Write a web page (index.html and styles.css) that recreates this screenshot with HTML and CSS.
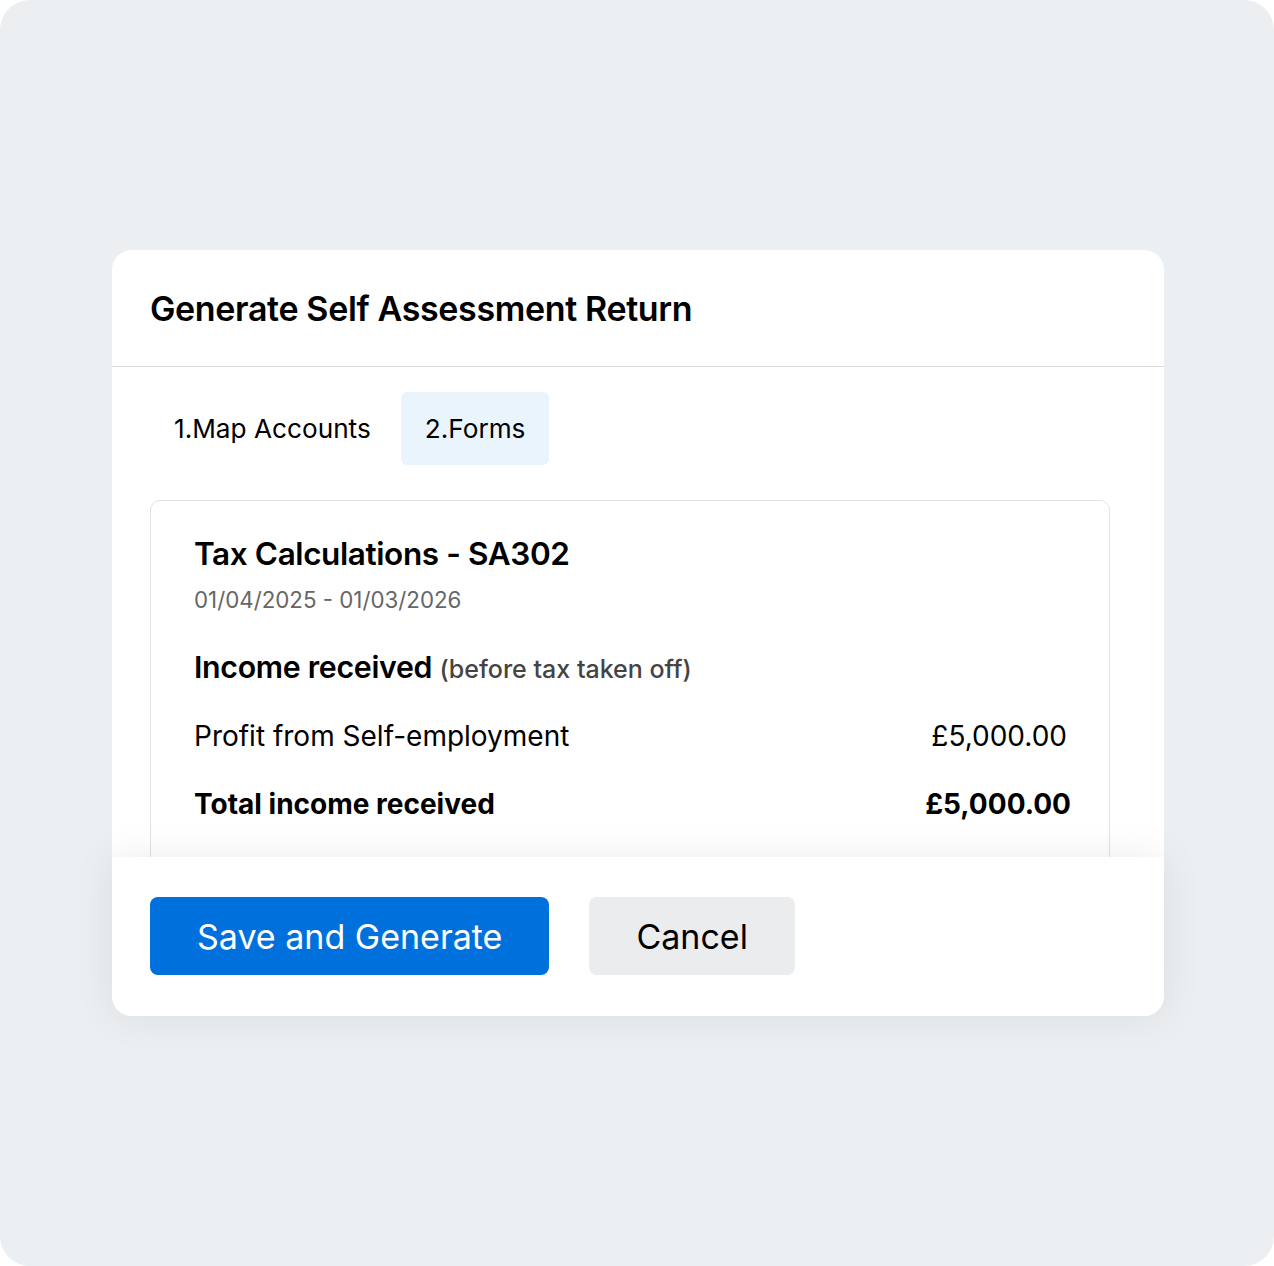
FILE: index.html
```html
<!DOCTYPE html>
<html lang="en">
<head>
    <meta charset="UTF-8">
    <meta name="viewport" content="width=device-width, initial-scale=1.0">
    <title>Generate Self Assessment Return</title>
    <link rel="stylesheet" href="styles.css">
</head>
<body>
    <div class="frame">
        <div class="dialog">
            <div class="dialog-header">
                <h1>Generate Self Assessment Return</h1>
            </div>

            <div class="dialog-body">
                <div class="steps">
                    <div class="step">1.Map Accounts</div>
                    <div class="step active">2.Forms</div>
                </div>

                <div class="form-card">
                    <h2>Tax Calculations - SA302</h2>
                    <div class="period">01/04/2025 - 01/03/2026</div>

                    <h3>Income received <span class="note">(before tax taken off)</span></h3>

                    <div class="row">
                        <span>Profit from Self-employment</span>
                        <span class="amount">£5,000.00</span>
                    </div>
                    <div class="row total">
                        <span>Total income received</span>
                        <span class="amount">£5,000.00</span>
                    </div>
                </div>
            </div>

            <div class="dialog-footer">
                <button type="button" class="btn primary">Save and Generate</button>
                <button type="button" class="btn">Cancel</button>
            </div>
        </div>
    </div>
</body>
</html>
```

FILE: styles.css
```css
* {
    box-sizing: border-box;
}
body {
    margin: 0;
    background: #fff;
    font-family: Inter, "Noto Sans", sans-serif;
    color: #000;
}
.frame {
    width: 1274px;
    height: 1266px;
    border-radius: 30px;
    background: #eceff2;
    display: flex;
    align-items: center;
    justify-content: center;
}
.dialog {
    width: 1052px;
    background: #fff;
    border-radius: 20px;
    display: flex;
    flex-direction: column;
    margin-left: 2px;
}
.dialog-header {
    height: 117px;
    border-bottom: 1px solid #dcdcdc;
    padding: 0 38px;
    display: flex;
    align-items: center;
}
.dialog-header h1 {
    margin: 0;
    font-size: 34px;
    font-weight: 600;
    letter-spacing: -0.35px;
}
.dialog-body {
    height: 490px;
    overflow: hidden;
    padding: 25px 54px 0 38px;
}
.steps {
    display: flex;
    gap: 6px;
    margin-bottom: 35px;
}
.step {
    height: 73px;
    padding: 0 24px;
    border-radius: 6px;
    display: flex;
    align-items: center;
    font-size: 26.2px;
}
.step.active {
    background: #e9f4fd;
}
.form-card {
    border: 1px solid #e2e2e2;
    border-radius: 10px;
    padding: 33px 38px 80px 43px;
}
.form-card h2 {
    margin: 0;
    font-size: 31.5px;
    font-weight: 600;
    letter-spacing: -0.4px;
}
.period {
    margin-top: 13px;
    font-size: 22.3px;
    color: #666;
}
.form-card h3 {
    margin: 36px 0 0;
    font-size: 30.3px;
    font-weight: 600;
    letter-spacing: -0.3px;
}
.note {
    font-size: 25px;
    font-weight: 500;
    color: #444;
    letter-spacing: 0;
}
.row {
    display: flex;
    justify-content: space-between;
    font-size: 28px;
    margin-top: 34px;
}
.row.total {
    font-weight: 700;
    margin-top: 34px;
}
.row .amount {
    padding-right: 4px;
}
.row.total .amount {
    padding-right: 0;
}
.dialog-footer {
    position: relative;
    background: #fff;
    border-radius: 0 0 20px 20px;
    box-shadow: 0 0 40px rgba(0, 0, 0, 0.08);
    padding: 40px 38px 41px;
    display: flex;
    gap: 40px;
}
.btn {
    height: 78px;
    border: none;
    border-radius: 8px;
    background: #ebecee;
    color: #000;
    font-family: inherit;
    font-size: 34px;
    padding: 0 47px;
    cursor: pointer;
}
.btn.primary {
    background: #0071dc;
    color: #fff;
}
```
